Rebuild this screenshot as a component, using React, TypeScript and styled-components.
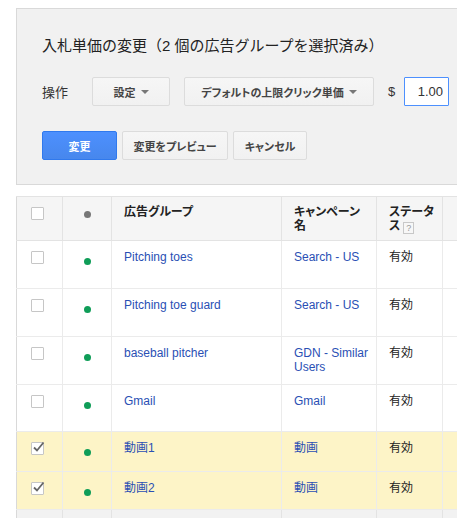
import React from "react";
import styled, { createGlobalStyle } from "styled-components";

const Global = createGlobalStyle`
  html, body { margin: 0; padding: 0; background: #fff; }
  body {
    font-family: "Liberation Sans", "Noto Sans CJK JP", sans-serif;
    font-feature-settings: "palt";
    color: #222;
  }
  #root { width: 457px; height: 518px; overflow: hidden; }
`;

const Page = styled.div`
  width: 457px;
  height: 518px;
  overflow: hidden;
  padding-top: 8px;
  box-sizing: border-box;
`;

const Panel = styled.div`
  margin-left: 16px;
  width: 470px;
  box-sizing: border-box;
  background: #f1f1f1;
  border: 1px solid #d9d9d9;
  padding: 27px 0 24px 25px;
`;

const Title = styled.div`
  font-size: 15px;
  line-height: 20px;
  color: #222;
  font-feature-settings: normal;
`;

const ControlRow = styled.div<{ $gap: number; $mt: number }>`
  display: flex;
  align-items: center;
  gap: ${(p) => p.$gap}px;
  margin-top: ${(p) => p.$mt}px;
`;

const Label = styled.span`
  font-size: 13px;
  color: #333;
  width: 50px;
`;

const Spacer = styled.span<{ $w: number }>`
  width: ${(p) => p.$w}px;
  flex: none;
`;

const Button = styled.button<{ $w: number; $primary?: boolean }>`
  box-sizing: border-box;
  width: ${(p) => p.$w}px;
  height: 29px;
  padding: 0;
  border-radius: 2px;
  font-family: inherit;
  font-feature-settings: "palt";
  font-size: 11px;
  font-weight: bold;
  display: flex;
  align-items: center;
  justify-content: center;
  gap: 5px;
  cursor: default;
  border: 1px solid ${(p) => (p.$primary ? "#3079ed" : "#dcdcdc")};
  background: ${(p) =>
    p.$primary
      ? "linear-gradient(#4d90fe, #4787ed)"
      : "linear-gradient(#f6f6f6, #f1f1f1)"};
  color: ${(p) => (p.$primary ? "#fff" : "#444")};
`;

const Caret = styled.span`
  width: 0;
  height: 0;
  border-left: 4px solid transparent;
  border-right: 4px solid transparent;
  border-top: 4px solid #777;
  margin-top: 1px;
`;

const Dollar = styled.span`
  font-size: 13px;
  color: #333;
  width: 16px;
`;

const Input = styled.input`
  box-sizing: border-box;
  width: 45px;
  height: 29px;
  border: 1px solid #4d90fe;
  border-radius: 1px;
  background: #fff;
  font-family: "Liberation Sans", sans-serif;
  font-size: 13px;
  color: #333;
  text-align: right;
  padding: 0 5px;
  outline: none;
`;

const TableWrap = styled.div`
  margin-top: 11px;
  margin-left: 16px;
`;

const Table = styled.table`
  table-layout: fixed;
  border-collapse: collapse;
  width: 486px;
  border-left: 1px solid #d9d9d9;
`;

const Th = styled.th<{ $w: number; $bare?: boolean }>`
  width: ${(p) => p.$w}px;
  background: #f5f5f5;
  border-right: 1px solid #e3e3e3;
  border-top: 1px solid #e3e3e3;
  border-bottom: 1px solid #e3e3e3;
  text-align: left;
  vertical-align: top;
  padding: ${(p) => (p.$bare ? "0" : "8px 6px 0 12px")};
  height: 44px;
  box-sizing: border-box;
  font-size: 12px;
  line-height: 14px;
  font-weight: bold;
  color: #222;
`;

const Tr = styled.tr<{ $h: number; $selected?: boolean }>`
  height: ${(p) => p.$h}px;
  background: ${(p) => (p.$selected ? "#fdf4c7" : "#fff")};
`;

const Td = styled.td<{ $bare?: boolean }>`
  border-right: 1px solid #ebebeb;
  border-bottom: 1px solid #ebebeb;
  vertical-align: top;
  padding: ${(p) => (p.$bare ? "0" : "9px 6px 0 12px")};
  font-size: 12px;
  line-height: 14px;
  color: #222;
`;

const FooterTr = styled.tr`
  height: 20px;
  background: #f2f2f2;
`;

const FooterTd = styled.td`
  border-right: 1px solid #e3e3e3;
`;

const Box = styled.span<{ $mt: number }>`
  display: block;
  box-sizing: border-box;
  width: 13px;
  height: 13px;
  margin-top: ${(p) => p.$mt}px;
  margin-left: 14px;
  border: 1px solid #c6c6c6;
  border-radius: 1px;
  background: #fff;
  position: relative;
`;

const Dot = styled.span<{ $c: string; $mt: number }>`
  display: block;
  width: 7px;
  height: 7px;
  border-radius: 50%;
  background: ${(p) => p.$c};
  margin: ${(p) => p.$mt}px auto 0 auto;
`;

const Link = styled.a`
  color: #2a4fb4;
  text-decoration: none;
`;

const Help = styled.span`
  display: inline-block;
  box-sizing: border-box;
  width: 11px;
  height: 12px;
  border: 1px solid #c8c8c8;
  background: #f7f7f7;
  color: #999;
  font-size: 9px;
  line-height: 10px;
  font-weight: normal;
  text-align: center;
  vertical-align: -1px;
  margin-left: 3px;
`;

const CheckMark = styled.svg`
  position: absolute;
  left: 0;
  top: -2px;
`;

const Checkbox = ({ checked, mt }: { checked?: boolean; mt: number }) => (
  <Box $mt={mt}>
    {checked && (
      <CheckMark width="13" height="12" viewBox="0 0 13 12">
        <path d="M2 6.5 L5 9.5 L11.5 1.5" fill="none" stroke="#666" strokeWidth="1.8" />
      </CheckMark>
    )}
  </Box>
);

type Row = {
  name: string;
  campaign: React.ReactNode;
  h: number;
  selected?: boolean;
};

const rows: Row[] = [
  { name: "Pitching toes", campaign: "Search - US", h: 48 },
  { name: "Pitching toe guard", campaign: "Search - US", h: 48 },
  {
    name: "baseball pitcher",
    campaign: (
      <>
        GDN - Similar
        <br />
        Users
      </>
    ),
    h: 48,
  },
  { name: "Gmail", campaign: "Gmail", h: 47 },
  { name: "動画1", campaign: "動画", h: 40, selected: true },
  { name: "動画2", campaign: "動画", h: 38, selected: true },
];

export default function App() {
  return (
    <Page>
      <Global />
      <Panel>
        <Title>入札単価の変更（2 個の広告グループを選択済み）</Title>
        <ControlRow $gap={0} $mt={21}>
          <Label>操作</Label>
          <Button $w={78}>
            設定 <Caret />
          </Button>
          <Spacer $w={14} />
          <Button $w={190}>
            デフォルトの上限クリック単価 <Caret />
          </Button>
          <Spacer $w={14} />
          <Dollar>$</Dollar>
          <Input defaultValue="1.00" />
        </ControlRow>
        <ControlRow $gap={5} $mt={25}>
          <Button $w={75} $primary>
            変更
          </Button>
          <Button $w={106}>変更をプレビュー</Button>
          <Button $w={74}>キャンセル</Button>
        </ControlRow>
      </Panel>
      <TableWrap>
        <Table>
          <thead>
            <tr>
              <Th $w={46} $bare>
                <Checkbox mt={10} />
              </Th>
              <Th $w={49} $bare>
                <Dot $c="#777" $mt={14} />
              </Th>
              <Th $w={170}>広告グループ</Th>
              <Th $w={95}>
                キャンペーン
                <br />名
              </Th>
              <Th $w={66}>
                ステータ
                <br />ス<Help>?</Help>
              </Th>
              <Th $w={60}></Th>
            </tr>
          </thead>
          <tbody>
            {rows.map((r, i) => (
              <Tr key={i} $h={r.h} $selected={r.selected}>
                <Td $bare>
                  <Checkbox checked={r.selected} mt={10} />
                </Td>
                <Td $bare>
                  <Dot $c="#0f9d58" $mt={17} />
                </Td>
                <Td>
                  <Link>{r.name}</Link>
                </Td>
                <Td>
                  <Link>{r.campaign}</Link>
                </Td>
                <Td>有効</Td>
                <Td></Td>
              </Tr>
            ))}
            <FooterTr>
              <FooterTd />
              <FooterTd />
              <FooterTd />
              <FooterTd />
              <FooterTd />
              <FooterTd />
            </FooterTr>
          </tbody>
        </Table>
      </TableWrap>
    </Page>
  );
}
